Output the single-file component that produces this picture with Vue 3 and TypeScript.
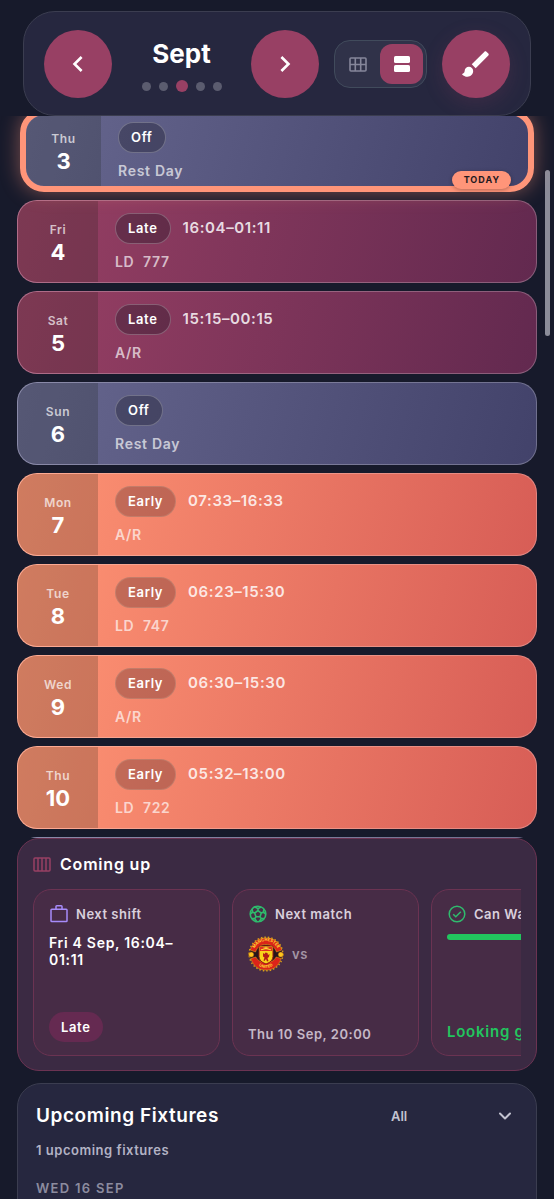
<script setup lang="ts">
import { ref } from 'vue'

type Kind = 'off' | 'late' | 'early'
interface Shift {
  weekday: string
  day: number
  kind: Kind
  time?: string
  note: string
  today?: boolean
}

const labels: Record<Kind, string> = { off: 'Off', late: 'Late', early: 'Early' }

const shifts: Shift[] = [
  { weekday: 'Thu', day: 3, kind: 'off', note: 'Rest Day', today: true },
  { weekday: 'Fri', day: 4, kind: 'late', time: '16:04–01:11', note: 'LD  777' },
  { weekday: 'Sat', day: 5, kind: 'late', time: '15:15–00:15', note: 'A/R' },
  { weekday: 'Sun', day: 6, kind: 'off', note: 'Rest Day' },
  { weekday: 'Mon', day: 7, kind: 'early', time: '07:33–16:33', note: 'A/R' },
  { weekday: 'Tue', day: 8, kind: 'early', time: '06:23–15:30', note: 'LD  747' },
  { weekday: 'Wed', day: 9, kind: 'early', time: '06:30–15:30', note: 'A/R' },
  { weekday: 'Thu', day: 10, kind: 'early', time: '05:32–13:00', note: 'LD  722' },
]

const months = [0, 1, 2, 3, 4]
const activeMonth = ref(2)
const view = ref<'grid' | 'list'>('list')
const filter = ref('All')
</script>

<template>
  <main class="page">
    <header class="topbar">
      <nav class="month-nav" aria-label="Month">
        <button class="round" type="button" aria-label="Previous month">
          <svg width="32" height="32" viewBox="0 0 24 24" fill="currentColor"><path d="M15.41 7.41 14 6l-6 6 6 6 1.41-1.41L10.83 12z" /></svg>
        </button>
        <div class="month">
          <h1>Sept</h1>
          <div class="dots">
            <span v-for="m in months" :key="m" class="dot" :class="{ active: m === activeMonth }"></span>
          </div>
        </div>
        <button class="round" type="button" aria-label="Next month">
          <svg width="32" height="32" viewBox="0 0 24 24" fill="currentColor"><path d="M10 6 8.59 7.41 13.17 12l-4.58 4.59L10 18l6-6z" /></svg>
        </button>
      </nav>
      <div class="toggle">
        <button type="button" :class="{ on: view === 'grid' }" aria-label="Grid view" @click="view = 'grid'">
          <svg width="18" height="15" viewBox="0 0 18 15" fill="none" stroke="currentColor" stroke-width="1.6"><rect x="1" y="1" width="16" height="13" rx="1" /><path d="M6.3 1v13M11.7 1v13M1 7.5h16" /></svg>
        </button>
        <button type="button" :class="{ on: view === 'list' }" aria-label="List view" @click="view = 'list'">
          <svg width="16" height="16" viewBox="0 0 16 16" fill="currentColor"><rect width="16" height="7" rx="1.6" /><rect y="9" width="16" height="7" rx="1.6" /></svg>
        </button>
      </div>
      <button class="round brush" type="button" aria-label="Theme">
        <svg width="34" height="34" viewBox="0 0 24 24" fill="currentColor"><path d="M7 14c-1.66 0-3 1.34-3 3 0 1.31-1.16 2-2 2 .92 1.22 2.49 2 4 2 2.21 0 4-1.79 4-4 0-1.66-1.34-3-3-3zM20.71 4.63l-1.34-1.34c-.39-.39-1.02-.39-1.41 0L9 12.25 11.75 15l8.96-8.96c.39-.39.39-1.02 0-1.41z" /></svg>
      </button>
    </header>

    <section class="schedule" aria-label="Shifts">
      <ul class="days">
        <li v-for="s in shifts" :key="s.day" class="day" :class="[s.kind, { today: s.today }]">
          <div class="date">
            <span class="weekday">{{ s.weekday }}</span>
            <span class="number">{{ s.day }}</span>
          </div>
          <div class="info">
            <div class="line">
              <span class="pill">{{ labels[s.kind] }}</span>
              <span v-if="s.time" class="time">{{ s.time }}</span>
            </div>
            <p class="note">{{ s.note }}</p>
          </div>
          <span v-if="s.today" class="today-badge">TODAY</span>
        </li>
        <li class="day off" aria-hidden="true"></li>
      </ul>
      <div class="thumb"></div>
    </section>

    <section class="coming">
      <h2>
        <svg width="18" height="15" viewBox="0 0 18 15" fill="none" stroke="currentColor" stroke-width="1.5"><rect x="1" y="1" width="16" height="13" rx="1" /><path d="M5 1v13M9 1v13M13 1v13" /></svg>
        Coming up
      </h2>
      <div class="tiles">
        <article class="tile">
          <h3>
            <svg class="violet" width="20" height="20" viewBox="0 0 20 20" fill="none" stroke="currentColor" stroke-width="1.5"><rect x="2" y="5.2" width="16" height="12.3" rx=".8" /><path d="M7 5V2.6q0-.8.8-.8h4.4q.8 0 .8.8V5" /></svg>
            Next shift
          </h3>
          <p class="when">Fri 4 Sep, 16:04–01:11</p>
          <span class="tag">Late</span>
        </article>
        <article class="tile">
          <h3>
            <svg class="green" width="20" height="20" viewBox="0 0 20 20" fill="none" stroke="currentColor" stroke-width="1.6"><circle cx="10" cy="10" r="7.8" /><path d="m10 6.6 3.3 2.4-1.3 3.8H8L6.7 9zM10 6.6V4.5M7 3l3 1.6L13 3M13.3 9l2-.8M17.7 10l-2.4-1.8.7-3.2M12 12.8l1.3 1.8M11.3 17.5l2-2.9h3M8 12.800l-1.300 1.800M8.700 17.500l-2-2.900h-3M6.700 9l-2-.8M2.300 10l2.400-1.800L4 5" /></svg>
            Next match
          </h3>
          <div class="teams">
            <svg class="crest" width="36" height="36" viewBox="0 0 36 36" role="img" aria-label="Manchester United">
              <defs>
                <path id="crest-top" d="M5.500 15.500A12.700 12.700 0 0 1 30.500 15.500" />
                <path id="crest-bottom" d="M5.700 25Q18 39 30.300 25" />
              </defs>
              <circle cx="18" cy="18" r="16.800" fill="none" stroke="#d79a18" stroke-width="1.500" stroke-dasharray="1.500 2" />
              <circle cx="18" cy="18" r="15.700" fill="#28151b" />
              <path d="M2.300 14C5 5 11 2 18 2s13 3 15.700 12l-5.200 2C26.500 10.700 23 8.500 18 8.500S9.500 10.700 7.500 16z" fill="#db2419" stroke="#f4b51b" stroke-width=".5" />
              <path d="M2.800 22.500l5-1.500c2.500 4 5.200 5.500 10.200 5.500s7.700-1.500 10.200-5.500l5 1.500C30.500 30 26 34 18 34S5.500 30 2.800 22.500z" fill="#db2419" stroke="#f4b51b" stroke-width=".5" />
              <path d="M11 10h14v10.500q0 5-7 7.500-7-2.500-7-7.500z" fill="#f9d21b" stroke="#951817" />
              <path d="M12 11h12v4H12z" fill="#df3120" />
              <path d="M13 13.800q5-2.500 10 0M15.500 12h5M18 10.700v2.500" stroke="#ffdc35" fill="none" />
              <path d="m15 17 1.500 1 1-1.500 2 .5.500 2 1.500-1-.5 3-1.500 1 1 3-1.500.5-1-2.500-1.500 2-1-.5 1-3-1.500-1z" fill="#b51d15" />
              <circle cx="3.200" cy="18.500" r="2.600" fill="#ffc51e" stroke="#8b4a10" stroke-width=".5" />
              <circle cx="32.800" cy="18.500" r="2.600" fill="#ffc51e" stroke="#8b4a10" stroke-width=".5" />
              <text class="crest-text"><textPath href="#crest-top" startOffset="50%" text-anchor="middle">MANCHESTER</textPath></text>
              <text class="crest-text"><textPath href="#crest-bottom" startOffset="50%" text-anchor="middle">UNITED</textPath></text>
            </svg>
            <span>vs</span>
          </div>
          <p class="kickoff">Thu 10 Sep, 20:00</p>
        </article>
        <article class="tile">
          <h3>
            <svg class="green" width="20" height="20" viewBox="0 0 20 20" fill="none" stroke="currentColor" stroke-width="1.5"><circle cx="10" cy="10" r="7.8" /><path d="m6.2 10.2 2.6 2.6 5-5" /></svg>
            Can Watch
          </h3>
          <div class="bar"></div>
          <p class="verdict">Looking good</p>
        </article>
      </div>
    </section>

    <section class="fixtures">
      <div class="fixtures-head">
        <h2>Upcoming Fixtures</h2>
        <div class="filter">
          <select v-model="filter" aria-label="Filter fixtures">
            <option>All</option>
            <option>Home</option>
            <option>Away</option>
          </select>
          <svg width="16" height="16" viewBox="0 0 16 16" fill="none" stroke="currentColor" stroke-width="2" stroke-linecap="round" stroke-linejoin="round"><path d="m3 5.5 5 5 5-5" /></svg>
        </div>
      </div>
      <p class="count">1 upcoming fixtures</p>
      <h3 class="group">WED 16 SEP</h3>
    </section>
  </main>
</template>

<style>
body {
  background: #171a2b;
}
</style>

<style scoped>
.page {
  box-sizing: border-box;
  height: 100vh;
  overflow: hidden;
  padding-top: 11px;
  display: flex;
  flex-direction: column;
  background: #171a2b;
  color: #fff;
  font-family: Inter, "Liberation Sans", sans-serif;
  font-weight: 600;
}
h1, h2, h3, p, ul {
  margin: 0;
  padding: 0;
  font-weight: 600;
}
h2, h3, p, span {
  letter-spacing: 0.05em;
}
svg {
  display: block;
  flex: none;
}
button {
  border: 0;
  padding: 0;
  display: grid;
  place-items: center;
  color: #fff;
  cursor: pointer;
}
.topbar {
  flex: none;
  margin: 0 23px;
  padding: 18px 20px 17px;
  display: flex;
  align-items: center;
  gap: 15px;
  border: 1px solid #3b3d50;
  border-radius: 32px;
  background: #26273f;
}
.month-nav {
  flex: 1;
  display: flex;
  align-items: center;
}
.round {
  flex: none;
  width: 68px;
  height: 68px;
  border-radius: 50%;
  background: #984064;
}
.brush {
  box-shadow: 0 6px 20px rgba(152, 64, 100, 0.2);
}
.month {
  flex: 1;
  padding-top: 2px;
  display: flex;
  flex-direction: column;
  align-items: center;
  gap: 10px;
}
.month h1 {
  font-size: 26px;
  line-height: 32px;
  font-weight: 700;
}
.dots {
  display: flex;
  align-items: center;
  gap: 8px;
  height: 12px;
}
.dot {
  width: 9px;
  height: 9px;
  border-radius: 50%;
  background: #5b5c6f;
}
.dot.active {
  width: 12px;
  height: 12px;
  background: #984064;
}
.toggle {
  box-sizing: border-box;
  display: flex;
  gap: 2px;
  padding: 3px;
  border: 1px solid #414b5c;
  border-radius: 16px;
  background: #303249;
}
.toggle button {
  width: 40px;
  height: 40px;
  border-radius: 12px;
  background: none;
  color: #85869a;
}
.toggle .on {
  width: 43px;
  background: #984064;
  color: #fff;
}
.schedule {
  flex: none;
  position: relative;
  height: 722px;
  overflow: hidden;
}
.days {
  margin-top: -7px;
  padding: 0 17px;
  list-style: none;
  display: flex;
  flex-direction: column;
  gap: 8px;
}
.day {
  box-sizing: border-box;
  height: 83px;
  flex: none;
  display: flex;
  border: 1px solid rgba(255, 255, 255, 0.24);
  border-radius: 20px;
  background-origin: border-box;
}
.late {
  background-image: linear-gradient(105deg, #984064, #62294f);
}
.off {
  background-image: linear-gradient(105deg, #67678f, #42426a);
}
.early {
  background-image: linear-gradient(105deg, #ff9474, #d75d56);
}
.today {
  position: relative;
  z-index: 1;
  margin: 0 3px;
  border: 6px solid #ff9579;
  border-radius: 24px;
  background-origin: padding-box;
  box-shadow: 0 0 20px rgba(255, 149, 121, 0.45);
}
.date {
  width: 80px;
  flex: none;
  display: flex;
  flex-direction: column;
  align-items: center;
  justify-content: center;
  border-radius: 19px 0 0 19px;
  background: rgba(20, 28, 16, 0.2);
}
.today .date {
  width: 75px;
}
.weekday {
  font-size: 12px;
  line-height: 20px;
  color: rgba(255, 255, 255, 0.7);
}
.number {
  font-size: 22px;
  line-height: 24px;
  font-weight: 700;
  letter-spacing: 0;
}
.info {
  flex: 1;
  padding-left: 17px;
  display: flex;
  flex-direction: column;
  justify-content: center;
  gap: 9px;
}
.line {
  display: flex;
  align-items: center;
  gap: 12px;
}
.pill {
  box-sizing: border-box;
  height: 31px;
  padding: 0 12px;
  border: 1px solid rgba(255, 255, 255, 0.24);
  border-radius: 16px;
  font-size: 13px;
  line-height: 29px;
  background: rgba(20, 20, 30, 0.32);
}
.early .pill {
  background: rgba(80, 40, 40, 0.32);
  border-color: rgba(200, 170, 150, 0.3);
}
.time {
  font-size: 15px;
  line-height: 20px;
  letter-spacing: 0.04em;
  color: rgba(255, 255, 255, 0.84);
}
.note {
  font-size: 14px;
  line-height: 18px;
  white-space: pre;
  color: rgba(255, 255, 255, 0.68);
}
.today-badge {
  position: absolute;
  right: 17px;
  bottom: -3px;
  padding: 0 11px 0 12px;
  border-radius: 9px;
  font-size: 9px;
  line-height: 18px;
  font-weight: 700;
  letter-spacing: 1px;
  color: #24191f;
  background: #ff9579;
  box-shadow: 0 1px 4px rgba(0, 0, 0, 0.3);
}
.thumb {
  position: absolute;
  right: 4px;
  top: 54px;
  width: 5px;
  height: 166px;
  border-radius: 3px;
  background: #8b8c99;
}
.coming {
  flex: none;
  margin: 0 17px;
  padding: 14px 15px;
  border: 1px solid #6b3352;
  border-radius: 22px;
  background: #3b2a43;
}
.coming h2 {
  display: flex;
  align-items: center;
  gap: 9px;
  font-size: 16px;
  line-height: 22px;
}
.coming h2 svg {
  color: #984064;
}
.tiles {
  margin-top: 14px;
  display: flex;
  gap: 12px;
  overflow: hidden;
}
.tile {
  box-sizing: border-box;
  flex: none;
  width: 187px;
  height: 167px;
  padding: 14px 15px 13px;
  display: flex;
  flex-direction: column;
  align-items: flex-start;
  border: 1px solid #6b3352;
  border-radius: 18px;
  background: #472c46;
}
.tile h3 {
  display: flex;
  align-items: center;
  gap: 7px;
  font-size: 13px;
  line-height: 20px;
  letter-spacing: 0.04em;
  white-space: nowrap;
  color: #d9d0dc;
}
.violet {
  color: #a78bfa;
}
.green {
  color: #2fbb6d;
}
.when {
  margin-top: 10px;
  font-size: 14px;
  line-height: 17px;
}
.tag {
  margin-top: auto;
  padding: 0 12px;
  border-radius: 15px;
  font-size: 13px;
  line-height: 30px;
  background: #652a51;
}
.teams {
  margin-top: 12px;
  display: flex;
  align-items: center;
  gap: 8px;
  font-size: 13px;
  color: #a395a5;
}
.crest-text {
  font-size: 4px;
  font-weight: 700;
  fill: #ffdc35;
}
.kickoff {
  margin-top: auto;
  font-size: 13px;
  line-height: 16px;
  letter-spacing: 0.04em;
  white-space: nowrap;
  color: #c5b8c6;
}
.bar {
  align-self: stretch;
  height: 6px;
  margin-top: 10px;
  border-radius: 3px;
  background: #22c55e;
}
.verdict {
  margin-top: auto;
  font-size: 15px;
  line-height: 20px;
  color: #22c55e;
}
.fixtures {
  flex: none;
  margin: 12px 17px 0;
  padding: 20px 18px 32px;
  border: 1px solid #3b3d50;
  border-radius: 24px;
  background: #26273f;
}
.fixtures-head {
  display: flex;
  align-items: center;
  justify-content: space-between;
}
.fixtures-head h2 {
  font-size: 19px;
  line-height: 24px;
  letter-spacing: 0.03em;
}
.filter {
  display: grid;
  grid-template-columns: 1fr 16px;
  width: 130px;
  padding-right: 5px;
  align-items: center;
  color: #c3c3d0;
}
.filter select {
  grid-area: 1 / 1 / 2 / 3;
  appearance: none;
  border: 0;
  padding: 0 8px;
  font: inherit;
  font-size: 13px;
  line-height: 20px;
  color: inherit;
  background: none;
}
.filter svg {
  grid-area: 1 / 2;
  pointer-events: none;
}
.count {
  margin-top: 12px;
  font-size: 13px;
  line-height: 20px;
  letter-spacing: 0.04em;
  color: #b3b3c5;
}
.group {
  margin-top: 19px;
  font-size: 13px;
  line-height: 18px;
  letter-spacing: 0.1em;
  color: #8c8c9f;
}
</style>
